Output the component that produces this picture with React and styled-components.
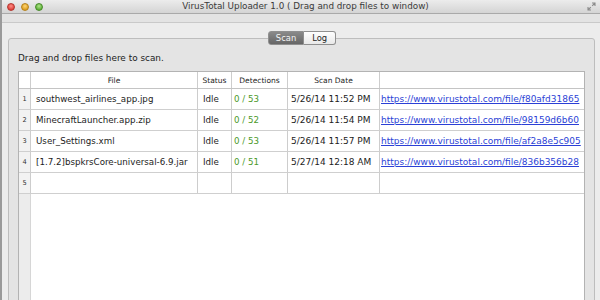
import React from 'react';
import styled, { createGlobalStyle } from 'styled-components';

const GlobalStyle = createGlobalStyle`
  html, body { margin: 0; padding: 0; background: #ececec; }
  body { font-family: "DejaVu Sans", "Liberation Sans", sans-serif; }
`;

const Window = styled.div`
  width: 600px;
  height: 300px;
  overflow: hidden;
  display: flex;
  flex-direction: column;
  background: #ececec;
  border-left: 2px solid #9a9a9a;
  box-sizing: border-box;
`;

const TitleBar = styled.div`
  height: 13px;
  flex: none;
  display: flex;
  align-items: center;
  padding: 0 4px 0 5px;
  background: linear-gradient(#ececec, #d4d4d4);
  border-bottom: 1px solid #a9a9a9;
  font-size: 8.8px;
  color: #3a3a3a;
`;

const Lights = styled.div`
  display: flex;
  gap: 6px;
  width: 50px;
`;

const Light = styled.span`
  width: 8px;
  height: 8px;
  border-radius: 50%;
  box-sizing: border-box;
  border: 1px solid ${p => p.$edge};
  background: radial-gradient(circle at 50% 35%, ${p => p.$hi}, ${p => p.$color} 70%);
`;

const Title = styled.div`
  flex: 1;
  text-align: center;
  margin-top: -1px;
  padding-left: 8px;
`;

const Resize = styled.div`
  width: 50px;
  display: flex;
  justify-content: flex-end;
`;

const Strip = styled.div`
  height: 8px;
  flex: none;
  background: #e3e3e3;
  border-bottom: 1px solid #c9c9c9;
`;

const Content = styled.div`
  flex: 1;
  display: flex;
  flex-direction: column;
  padding: 8px 5px 0 6px;
  margin-bottom: -20px;
`;

const TabBar = styled.div`
  display: flex;
  justify-content: center;
  margin-bottom: -7px;
  position: relative;
  z-index: 1;
  padding-left: 1px;
`;

const Tab = styled.div`
  height: 14px;
  box-sizing: border-box;
  padding: 0 ${p => (p.$active ? '7px' : '8px')};
  display: flex;
  align-items: center;
  font-size: 8.4px;
  border: 1px solid #8f8f8f;
  color: ${p => (p.$active ? '#f4f4f4' : '#1e1e1e')};
  background: ${p => (p.$active ? 'linear-gradient(#8a8a8a, #666)' : 'linear-gradient(#fefefe, #e9e9e9)')};
  border-radius: ${p => (p.$active ? '3px 0 0 3px' : '0 3px 3px 0')};
  ${p => !p.$active && 'border-left: none;'}
`;

const Panel = styled.div`
  flex: 1;
  display: flex;
  flex-direction: column;
  border: 1px solid #bdbdbd;
  border-radius: 3px;
  background: #e4e4e4;
  padding: 12px 9px 0 9px;
`;

const Hint = styled.div`
  font-size: 8.9px;
  color: #1c1c1c;
  height: 20px;
  line-height: 14px;
`;

const Table = styled.div`
  flex: 1;
  display: flex;
  flex-direction: column;
  background: #fff;
  border: 1px solid #b3b3b3;
`;

const Row = styled.div`
  display: grid;
  grid-template-columns: 12px 167px 34px 56px 92px 1fr;
  height: ${p => (p.$header ? '17px' : '21px')};
  flex: none;
  border-bottom: 1px solid ${p => (p.$header ? '#c4c4c4' : '#cfcfcf')};
  box-sizing: border-box;
`;

const Cell = styled.div`
  box-sizing: border-box;
  display: flex;
  align-items: center;
  justify-content: ${p => (p.$center ? 'center' : 'flex-start')};
  padding-left: ${p => (p.$center ? '0' : p.$pad || '5px')};
  border-right: ${p => (p.$last ? 'none' : '1px solid #cdcdcd')};
  font-size: ${p => p.$size || (p.$head ? '7.5px' : '8.7px')};
  color: ${p => p.$color || '#1c1c1c'};
  white-space: nowrap;
  overflow: hidden;
`;

const NumCell = styled(Cell)`
  background: #f2f2f2;
  font-size: 6.6px;
  color: #333;
  justify-content: center;
  padding-left: 0;
`;

const LinkCell = styled(Cell)`
  padding-left: 1px;
  font-size: 9px;
  a {
    color: #2b3fd6;
    text-decoration: underline;
  }
`;

const Filler = styled.div`
  flex: 1;
  display: grid;
  grid-template-columns: 12px 1fr;
`;

const FillerNum = styled.div`
  background: #ececec;
  border-right: 1px solid #d6d6d6;
`;

const rows = [
  { file: 'southwest_airlines_app.jpg', det: '0 / 53', date: '5/26/14 11:52 PM', hash: 'f80afd31865' },
  { file: 'MinecraftLauncher.app.zip', det: '0 / 52', date: '5/26/14 11:54 PM', hash: '98159d6b60' },
  { file: 'User_Settings.xml', det: '0 / 53', date: '5/26/14 11:57 PM', hash: 'af2a8e5c905' },
  { file: '[1.7.2]bspkrsCore-universal-6.9.jar', det: '0 / 51', date: '5/27/14 12:18 AM', hash: '836b356b28' },
];

export default function App() {
  return (
    <Window>
      <GlobalStyle />
      <TitleBar>
        <Lights>
          <Light $color="#e0443e" $hi="#ff8d85" $edge="#b3362f" />
          <Light $color="#dea123" $hi="#ffd574" $edge="#b5811a" />
          <Light $color="#61b13a" $hi="#aee68a" $edge="#478a29" />
        </Lights>
        <Title>VirusTotal Uploader 1.0 ( Drag and drop files to window)</Title>
        <Resize>
          <svg width="9" height="9" viewBox="0 0 9 9">
            <path d="M5 1h3v3M8 1L5.2 3.8M4 8H1V5M1 8l2.8-2.8" stroke="#8a8a8a" strokeWidth="1.1" fill="none" />
          </svg>
        </Resize>
      </TitleBar>
      <Strip />
      <Content>
        <TabBar>
          <Tab $active>Scan</Tab>
          <Tab>Log</Tab>
        </TabBar>
        <Panel>
          <Hint>Drag and drop files here to scan.</Hint>
          <Table>
            <Row $header>
              <Cell $center $head />
              <Cell $center $head>File</Cell>
              <Cell $center $head>Status</Cell>
              <Cell $center $head>Detections</Cell>
              <Cell $center $head>Scan Date</Cell>
              <Cell $center $head $last />
            </Row>
            {rows.map((r, i) => (
              <Row key={i}>
                <NumCell>{i + 1}</NumCell>
                <Cell>{r.file}</Cell>
                <Cell>Idle</Cell>
                <Cell $color="#4c9a2a" $pad="2px">{r.det}</Cell>
                <Cell $size="9px" $pad="3px">{r.date}</Cell>
                <LinkCell $last>
                  <a href="#">https://www.virustotal.com/file/{r.hash}</a>
                </LinkCell>
              </Row>
            ))}
            <Row>
              <NumCell>5</NumCell>
              <Cell />
              <Cell />
              <Cell />
              <Cell />
              <Cell $last />
            </Row>
            <Filler>
              <FillerNum />
              <div />
            </Filler>
          </Table>
        </Panel>
      </Content>
    </Window>
  );
}
